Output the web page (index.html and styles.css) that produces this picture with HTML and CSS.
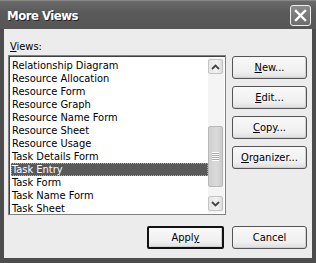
FILE: index.html
```html
<!DOCTYPE html>
<html>
<head>
<meta charset="utf-8">
<link rel="stylesheet" href="styles.css">
</head>
<body>
<div class="window">
  <div class="titlebar">
    <span class="title">More Views</span>
    <span class="close">
      <svg width="13" height="13" viewBox="0 0 13 13"><path d="M2 2 L11 11 M11 2 L2 11" stroke="#fff" stroke-width="2.4" stroke-linecap="square"/></svg>
    </span>
  </div>
  <div class="content">
    <div class="label"><u>V</u>iews:</div>
    <div class="main">
      <div class="listbox">
        <ul class="items">
          <li>Relationship Diagram</li>
          <li>Resource Allocation</li>
          <li>Resource Form</li>
          <li>Resource Graph</li>
          <li>Resource Name Form</li>
          <li>Resource Sheet</li>
          <li>Resource Usage</li>
          <li>Task Details Form</li>
          <li class="selected">Task Entry</li>
          <li>Task Form</li>
          <li>Task Name Form</li>
          <li>Task Sheet</li>
        </ul>
        <div class="scrollbar">
          <div class="sbtn"><svg width="9" height="6" viewBox="0 0 9 6"><path d="M1 5 L4.5 1.5 L8 5" fill="none" stroke="#444" stroke-width="1.8"/></svg></div>
          <div class="track">
            <div class="thumb-gap-top"></div>
            <div class="thumb"><span class="grip"></span></div>
          </div>
          <div class="sbtn"><svg width="9" height="6" viewBox="0 0 9 6"><path d="M1 1 L4.5 4.5 L8 1" fill="none" stroke="#444" stroke-width="1.8"/></svg></div>
        </div>
      </div>
      <div class="side">
        <button class="btn"><u>N</u>ew...</button>
        <button class="btn"><u>E</u>dit...</button>
        <button class="btn"><u>C</u>opy...</button>
        <button class="btn"><u>O</u>rganizer...</button>
      </div>
    </div>
    <div class="footer">
      <button class="btn default">Appl<u>y</u></button>
      <button class="btn">Cancel</button>
    </div>
  </div>
</div>
</body>
</html>
```
FILE: styles.css
```css
* { box-sizing: border-box; }
html, body { margin: 0; padding: 0; background: #3a3a3a; }
body { width: 316px; height: 263px; overflow: hidden; font-family: "DejaVu Sans Condensed", "DejaVu Sans", sans-serif; font-size: 11px; }
.window {
  width: 316px; height: 263px;
  background: #4c4c4c;
  display: flex; flex-direction: column;
  padding: 0 4px 5px 4px;
}
.titlebar {
  height: 29px;
  margin: 0 -4px;
  padding: 0 5px 0 7px;
  display: flex; align-items: center; justify-content: space-between;
  background: linear-gradient(#6a6a6a, #5a5a5a 40%, #565656);
  border-top: 1px solid #888;
}
.title {
  color: #fff; font-weight: bold; font-size: 13px;
  font-family: "DejaVu Sans Condensed", "DejaVu Sans", sans-serif;
  text-shadow: 1px 1px 0 #222;
  letter-spacing: -0.5px;
  padding-top: 1px;
}
.close {
  width: 21px; height: 21px;
  border: 1px solid #eee; border-radius: 3px;
  background: linear-gradient(#8a8a8a, #6c6c6c);
  display: flex; align-items: center; justify-content: center;
}
.close svg { display: block; }
.content {
  flex: 1;
  background: #ececec;
  padding: 0 5px 0 4px;
  display: flex; flex-direction: column;
  color: #000;
}
.label { padding: 11px 0 0 2px; height: 26px; line-height: 13px; }
.main { display: flex; gap: 6px; }
.listbox {
  width: 218px; height: 160px;
  border: 1px solid #808080;
  box-shadow: inset 1px 1px 0 #404040;
  background: #fff;
  display: flex;
  padding: 2px 1px 1px 2px;
}
.items { list-style: none; margin: 0; padding: 1px 0 0 0; flex: 1; }
.items li { height: 13px; line-height: 13px; padding-left: 1px; font-size: 11px; white-space: nowrap; }
.items li.selected { background: #5a5a5a; color: #fff; outline: 1px dotted #aaa; outline-offset: -1px; }
.scrollbar {
  width: 16px; display: flex; flex-direction: column;
  background: #f4f4f4;
  padding: 1px 0 2px;
}
.sbtn {
  height: 15px; margin: 0 1px 0 0;
  border: 1px solid #c4c4c4; border-radius: 2px;
  background: linear-gradient(90deg, #e6e6e6, #f2f2f2 60%, #dcdcdc);
  display: flex; align-items: center; justify-content: center;
}
.track { flex: 1; display: flex; flex-direction: column; }
.thumb-gap-top { height: 52px; }
.thumb {
  height: 61px; margin-right: 1px;
  border: 1px solid #b8b8b8; border-radius: 2px;
  background: linear-gradient(90deg, #d0d0d0, #dadada 60%, #cbcbcb);
  display: flex; align-items: center; justify-content: center;
}
.grip {
  width: 7px; height: 9px;
  background: repeating-linear-gradient(#fff 0 1px, #a8a8a8 1px 2px);
}
.side { display: flex; flex-direction: column; gap: 7px; padding-top: 1px; }
.btn {
  width: 75px; height: 23px;
  font-family: inherit; font-size: 11px; color: #000;
  border: 1px solid #555; border-radius: 3px;
  background: linear-gradient(#f8f8f8, #f0f0f0 70%, #dedede);
  padding: 0; margin: 0;
  box-shadow: inset -1px -1px 0 #d0d0d0;
}
.footer { display: flex; justify-content: flex-end; gap: 8px; padding-top: 11px; }
.btn.default { width: 77px; border: 2px solid #111; border-radius: 2px; }
```
